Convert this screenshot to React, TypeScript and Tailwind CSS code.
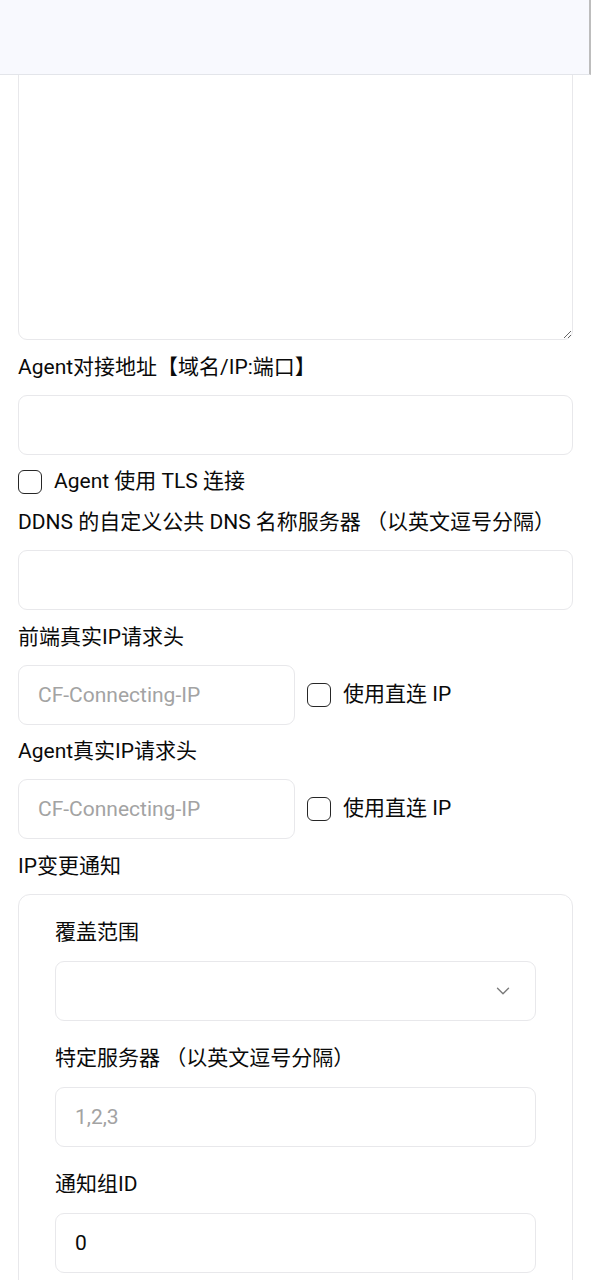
import { ChevronDown } from "lucide-react";

const font = { fontFamily: 'Roboto, "Noto Sans CJK SC", sans-serif' };

const Label = ({ children }: { children: React.ReactNode }) => (
  <label className="block text-[21px] leading-[27.5px] font-normal text-[#0a0a0a]">{children}</label>
);

const Input = ({ placeholder, value, className = "" }: { placeholder?: string; value?: string; className?: string }) => (
  <input
    readOnly
    placeholder={placeholder}
    value={value ?? ""}
    className={`h-[60px] rounded-[9px] border border-[#e8e8eb] bg-white px-[19px] text-[21px] text-[#0a0a0a] placeholder:text-[#a3a3a3] outline-none ${className}`}
  />
);

const Checkbox = ({ label }: { label: string }) => (
  <div className="flex items-center gap-[12px] h-[27.5px]">
    <span className="w-[24px] h-[24px] rounded-[6px] border-[1.5px] border-[#262626] shrink-0" />
    <span className="text-[21px] text-[#0a0a0a]">{label}</span>
  </div>
);

export default function App() {
  return (
    <div className="relative min-h-[1280px] bg-white overflow-hidden" style={font}>
      {/* Header */}
      <div className="absolute top-0 left-0 right-0 z-10 h-[75px] bg-[#f8f9fe] border-b border-[#e3e5ea] border-r-2 border-r-[#bdbdbd]" />

      {/* Form */}
      <div className="flex flex-col gap-[13.5px] px-[18px] pt-[40px]">
        <textarea
          readOnly
          className="w-full h-[300px] rounded-[9px] border border-[#e8e8eb] outline-none"
        />

        <Label>Agent对接地址【域名/IP:端口】</Label>
        <Input className="w-full" />

        <Checkbox label="Agent 使用 TLS 连接" />

        <Label>DDNS 的自定义公共 DNS 名称服务器 （以英文逗号分隔）</Label>
        <Input className="w-full" />

        <Label>前端真实IP请求头</Label>
        <div className="flex items-center gap-[12px]">
          <Input placeholder="CF-Connecting-IP" className="w-[277px]" />
          <Checkbox label="使用直连 IP" />
        </div>

        <Label>Agent真实IP请求头</Label>
        <div className="flex items-center gap-[12px]">
          <Input placeholder="CF-Connecting-IP" className="w-[277px]" />
          <Checkbox label="使用直连 IP" />
        </div>

        <Label>IP变更通知</Label>
        <div className="rounded-[12px] border border-[#e8e8eb] px-[36px] pt-[24.5px] pb-[40px] flex flex-col gap-[24.5px]">
          <div className="flex flex-col gap-[14px]">
            <Label>覆盖范围</Label>
            <div className="h-[60px] rounded-[9px] border border-[#e8e8eb] flex items-center justify-end pr-[21px]">
              <ChevronDown size={22} strokeWidth={1.5} className="text-[#7a7a7a]" />
            </div>
          </div>
          <div className="flex flex-col gap-[14px]">
            <Label>特定服务器 （以英文逗号分隔）</Label>
            <Input placeholder="1,2,3" className="w-full" />
          </div>
          <div className="flex flex-col gap-[14px]">
            <Label>通知组ID</Label>
            <Input value="0" className="w-full" />
          </div>
        </div>
      </div>
    </div>
  );
}
